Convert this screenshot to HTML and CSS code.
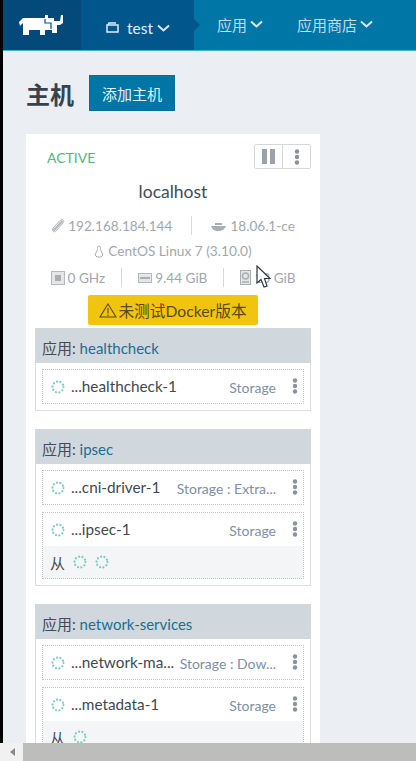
FILE: index.html
```html
<!DOCTYPE html>
<html lang="zh">
<head>
<meta charset="UTF-8" />
<title>主机</title>
<link rel="stylesheet" href="styles.css">
</head>
<body>

<svg width="0" height="0" class="defs">
  <symbol id="spin" viewBox="0 0 14 14">
    <circle cx="7" cy="7" r="5.5" fill="none" stroke="#7fcbc1" stroke-width="2.2" stroke-linecap="round" stroke-dasharray="0.1 3.36"/>
  </symbol>
  <symbol id="dots" viewBox="0 0 6 16">
    <circle cx="3" cy="2.5" r="2.2" fill="#8a929b"/>
    <circle cx="3" cy="8" r="2.2" fill="#8a929b"/>
    <circle cx="3" cy="13.5" r="2.2" fill="#8a929b"/>
  </symbol>
</svg>

<header class="topbar">
  <a class="logo">
    <svg width="46" height="24" viewBox="0 0 46 24"><path fill="#fff" d="M1 8 5 4H27V1H30V4H36V7H42L43 1H45V9L42 11H39V19H34V16H27V21H22V16H11V21H5V9L2 12Z"/><path fill="none" stroke="#01507f" stroke-width="1.2" d="M27 5V9H33V15"/></svg>
  </a>
  <a class="env">
    <svg width="13" height="11" viewBox="0 0 13 11"><path fill="none" stroke="#e4eef4" stroke-width="1.5" d="M1 3H12V10H1ZM2 3 3 1H10"/></svg>
    <span class="env-name">test</span>
    <svg class="chev" width="13" height="8" viewBox="0 0 13 8"><path d="M1 1.5 6.5 6.5 12 1.5"/></svg>
  </a>
  <nav class="menu">
    <a>应用<svg class="chev" width="13" height="8" viewBox="0 0 13 8"><path d="M1 1.5 6.5 6.5 12 1.5"/></svg></a>
    <a>应用商店<svg class="chev" width="13" height="8" viewBox="0 0 13 8"><path d="M1 1.5 6.5 6.5 12 1.5"/></svg></a>
  </nav>
</header>

<main class="page">
  <div class="title-row">
    <h1>主机</h1>
    <button class="add-btn">添加主机</button>
  </div>

  <section class="host">
    <div class="host-top">
      <span class="state">ACTIVE</span>
      <div class="btn-group">
        <span class="pause"><i></i><i></i></span>
        <span class="more"><svg width="6" height="16"><use href="#dots"/></svg></span>
      </div>
    </div>
    <div class="host-name">localhost</div>

    <div class="info info-net">
      <span class="cell">
        <svg width="14" height="15" viewBox="0 0 14 15"><path fill="none" stroke="#b4b9be" stroke-width="2.4" stroke-linecap="round" d="M3 12 11 3.5"/><path fill="none" stroke="#b4b9be" d="M2 10 9 2.5C12 0 14 3 12 5L5 13C3 15 0 13 2 10Z"/></svg>
        192.168.184.144
      </span>
      <span class="cell">
        <svg width="16" height="10" viewBox="0 0 16 10"><path fill="#a9aeb3" d="M0 5H15C14 8 11 10 7 10 3 10 1 8 0 5ZM4 2H11V4H4Z"/></svg>
        18.06.1-ce
      </span>
    </div>
    <div class="info-os">
      <svg width="10" height="13" viewBox="0 0 10 13"><path fill="none" stroke="#a9aeb3" d="M5 1C3.5 1 3.5 3 3.5 4.5L1 10 3 12H7L9 10 6.500 4.500C6.500 3 6.500 1 5 1Z"/></svg>
      CentOS Linux 7 (3.10.0)
    </div>
    <div class="info info-hw">
      <span class="cell">
        <svg width="14" height="14" viewBox="0 0 14 14"><rect x=".5" y=".5" width="13" height="13" fill="#e4e6e8" stroke="#b4b9be"/><rect x="4" y="4" width="6" height="6" fill="#a9aeb3"/></svg>
        0 GHz
      </span>
      <span class="cell">
        <svg width="14" height="10" viewBox="0 0 14 10"><rect x=".5" y=".5" width="13" height="9" fill="#e4e6e8" stroke="#b4b9be"/><path stroke="#a9aeb3" stroke-width="2" d="M2 5H12"/></svg>
        9.44 GiB
      </span>
      <span class="cell">
        <svg width="11" height="15" viewBox="0 0 11 15"><rect x=".5" y=".5" width="10" height="14" fill="#e4e6e8" stroke="#a9aeb3"/><circle cx="5.500" cy="6" r="3" fill="none" stroke="#a9aeb3" stroke-width="1.500"/><path stroke="#a9aeb3" stroke-width="1.500" d="M2 12H9"/></svg>
        <span class="disk">13 GiB</span>
      </span>
    </div>

    <div class="warn-wrap">
      <div class="warn">
        <svg width="18" height="15" viewBox="0 0 18 15"><path fill="none" stroke="#5a4a10" stroke-width="1.100" d="M9 1 17 14H1ZM9 5V10.500M9 11.500V13"/></svg>
        未测试Docker版本
      </div>
    </div>

    <div class="stack">
      <div class="stack-head">应用: <a>healthcheck</a></div>
      <div class="stack-body">
        <div class="box">
          <div class="row">
            <svg class="spin"><use href="#spin"/></svg>
            <span class="name">...healthcheck-1</span>
            <span class="image">Storage</span>
            <svg class="dots"><use href="#dots"/></svg>
          </div>
        </div>
      </div>
    </div>

    <div class="stack">
      <div class="stack-head">应用: <a>ipsec</a></div>
      <div class="stack-body">
        <div class="box">
          <div class="row">
            <svg class="spin"><use href="#spin"/></svg>
            <span class="name">...cni-driver-1</span>
            <span class="image">Storage : Extra...</span>
            <svg class="dots"><use href="#dots"/></svg>
          </div>
        </div>
        <div class="box">
          <div class="row">
            <svg class="spin"><use href="#spin"/></svg>
            <span class="name">...ipsec-1</span>
            <span class="image">Storage</span>
            <svg class="dots"><use href="#dots"/></svg>
          </div>
          <div class="sidekicks">
            从
            <svg class="spin"><use href="#spin"/></svg>
            <svg class="spin"><use href="#spin"/></svg>
          </div>
        </div>
      </div>
    </div>

    <div class="stack">
      <div class="stack-head">应用: <a>network-services</a></div>
      <div class="stack-body">
        <div class="box">
          <div class="row">
            <svg class="spin"><use href="#spin"/></svg>
            <span class="name">...network-ma...</span>
            <span class="image">Storage : Dow...</span>
            <svg class="dots"><use href="#dots"/></svg>
          </div>
        </div>
        <div class="box">
          <div class="row">
            <svg class="spin"><use href="#spin"/></svg>
            <span class="name">...metadata-1</span>
            <span class="image">Storage</span>
            <svg class="dots"><use href="#dots"/></svg>
          </div>
          <div class="sidekicks">
            从
            <svg class="spin"><use href="#spin"/></svg>
          </div>
        </div>
      </div>
    </div>
  </section>
</main>

<svg class="cursor" width="19" height="24" viewBox="0 0 19 24"><path fill="#fff" stroke="#33383d" stroke-width="1.200" d="M1 1V18L5 14.500 8 22 11 21 8.500 13.500H14Z"/></svg>

<div class="hscroll">
  <span class="hscroll-arrow"></span>
  <span class="hscroll-thumb"></span>
</div>

</body>
</html>
```

FILE: styles.css
```css
html, body { margin: 0; height: 761px; overflow: hidden; }
body { position: relative; background: #000; padding-left: 3px; box-sizing: border-box; font-family: Lato, "Noto Sans CJK SC", sans-serif; color: #3d4650; }
.defs { position: absolute; }
a { text-decoration: none; }

.topbar { display: flex; height: 51px; box-sizing: border-box; background: #0076a6; border-bottom: 1px solid #3fb4c8; }
.logo { display: flex; align-items: center; justify-content: center; width: 78px; background: #03497a; padding: 2px 2px 0 0; box-sizing: border-box; }
.env { position: relative; display: flex; align-items: center; justify-content: center; gap: 4px; width: 113px; padding: 5px 0 0 1px; box-sizing: border-box; background: #01568c; color: #e4eef4; font-size: 15.5px; }
.env-name { margin-left: 4px; }
.env::after { content: ""; position: absolute; left: 100%; top: 19px; border-left: 6px solid #01568c; border-top: 6px solid transparent; border-bottom: 6px solid transparent; }
.chev { fill: none; stroke: #dce9f0; stroke-width: 2; }
.menu { display: flex; align-items: center; gap: 34px; padding-left: 23px; padding-bottom: 2px; }
.menu a { display: flex; align-items: center; gap: 3px; color: #c2dbe8; font-size: 15px; }

.page { background: #ebeef2; height: 710px; padding: 24px 0 0 23px; box-sizing: border-box; overflow: hidden; }
.title-row { display: flex; align-items: center; gap: 15px; height: 36px; }
h1 { margin: 0; font-size: 24px; font-weight: 700; color: #39424c; }
.add-btn { width: 86px; height: 36px; padding: 0; border: 1px solid #0a6d9c; background: #0076a6; color: #e6f1f6; font: 15px Lato, "Noto Sans CJK SC", sans-serif; }

.host { width: 294px; margin-top: 23px; padding: 0 9px 0; box-sizing: border-box; background: #fff; }
.host-top { display: flex; justify-content: space-between; align-items: center; height: 40px; padding: 5px 0 0 12px; box-sizing: border-box; }
.state { color: #53b47e; font-size: 14px; margin-top: 2px; }
.btn-group { display: flex; height: 25px; border: 1px solid #d5d8db; border-radius: 2px; box-sizing: border-box; }
.pause { display: flex; align-items: center; justify-content: center; gap: 3px; width: 27px; border-right: 1px solid #d5d8db; }
.pause i { width: 5px; height: 15px; background: #9aa3ab; }
.more { display: flex; align-items: center; justify-content: center; width: 27px; }
.more svg { display: block; }

.host-name { text-align: center; font-size: 17.5px; line-height: 20px; margin-top: 8px; color: #444c55; }
.info { display: flex; align-items: center; justify-content: center; color: #a2a7ac; font-size: 13.6px; }
.cell { display: flex; align-items: center; gap: 3px; height: 19px; }
.cell + .cell { border-left: 1px solid #d7dadd; }
.info-net { margin-top: 14px; }
.info-net .cell { padding: 0 19px 0 0; }
.info-net .cell + .cell { padding: 0 0 0 19px; }
.info-os { display: flex; align-items: center; justify-content: center; gap: 4px; margin-top: 7px; color: #a2a7ac; font-size: 13.7px; line-height: 18px; }
.info-hw { margin-top: 8px; }
.info-hw .cell { padding: 0 16px; white-space: nowrap; }
.warn-wrap { display: flex; justify-content: center; margin-top: 8px; }
.warn { display: flex; align-items: center; justify-content: center; gap: 1px; width: 170px; height: 30px; background: #f1c40f; border-radius: 2px; color: #5a4a10; font-size: 15.7px; }

.stack { margin-top: 18px; border: 1px solid #dcdfe2; border-top: 0; }
.warn-wrap + .stack { margin-top: 3px; }
.stack-head { height: 35px; line-height: 40px; padding-left: 7px; background: #d0d8dd; font-size: 15px; color: #444c55; margin: 0 -1px; }
.stack-head a { color: #1a6e96; }
.stack-body { padding: 6px; display: flex; flex-direction: column; gap: 7px; }
.box { border: 1px dotted #bfc4c8; }
.row { display: flex; align-items: center; height: 33px; padding: 0 5px 0 8px; }
.spin { width: 14px; height: 14px; flex: none; }
.name { margin-left: 6px; font-size: 15.3px; color: #3f4850; white-space: nowrap; position: relative; top: -1px; }
.image { margin-left: auto; color: #7e90a5; font-size: 14px; white-space: nowrap; position: relative; top: 1px; }
.dots { width: 6px; height: 16px; margin-left: 16px; position: relative; top: -1px; }
.sidekicks { display: flex; align-items: center; gap: 8px; height: 32px; padding-left: 7px; background: #f4f5f6; font-size: 15px; color: #444c55; }

.cursor { position: absolute; left: 256px; top: 265px; }

.hscroll { position: absolute; left: 0; right: 0; bottom: 0; height: 18px; background: #f1f1f1; }
.hscroll-arrow { position: absolute; left: 10px; top: 5px; border-right: 5px solid #8a8a8a; border-top: 4px solid transparent; border-bottom: 4px solid transparent; }
.hscroll-thumb { position: absolute; left: 23px; right: 0; top: 0; bottom: 0; background: #bdbdbb; }
```
